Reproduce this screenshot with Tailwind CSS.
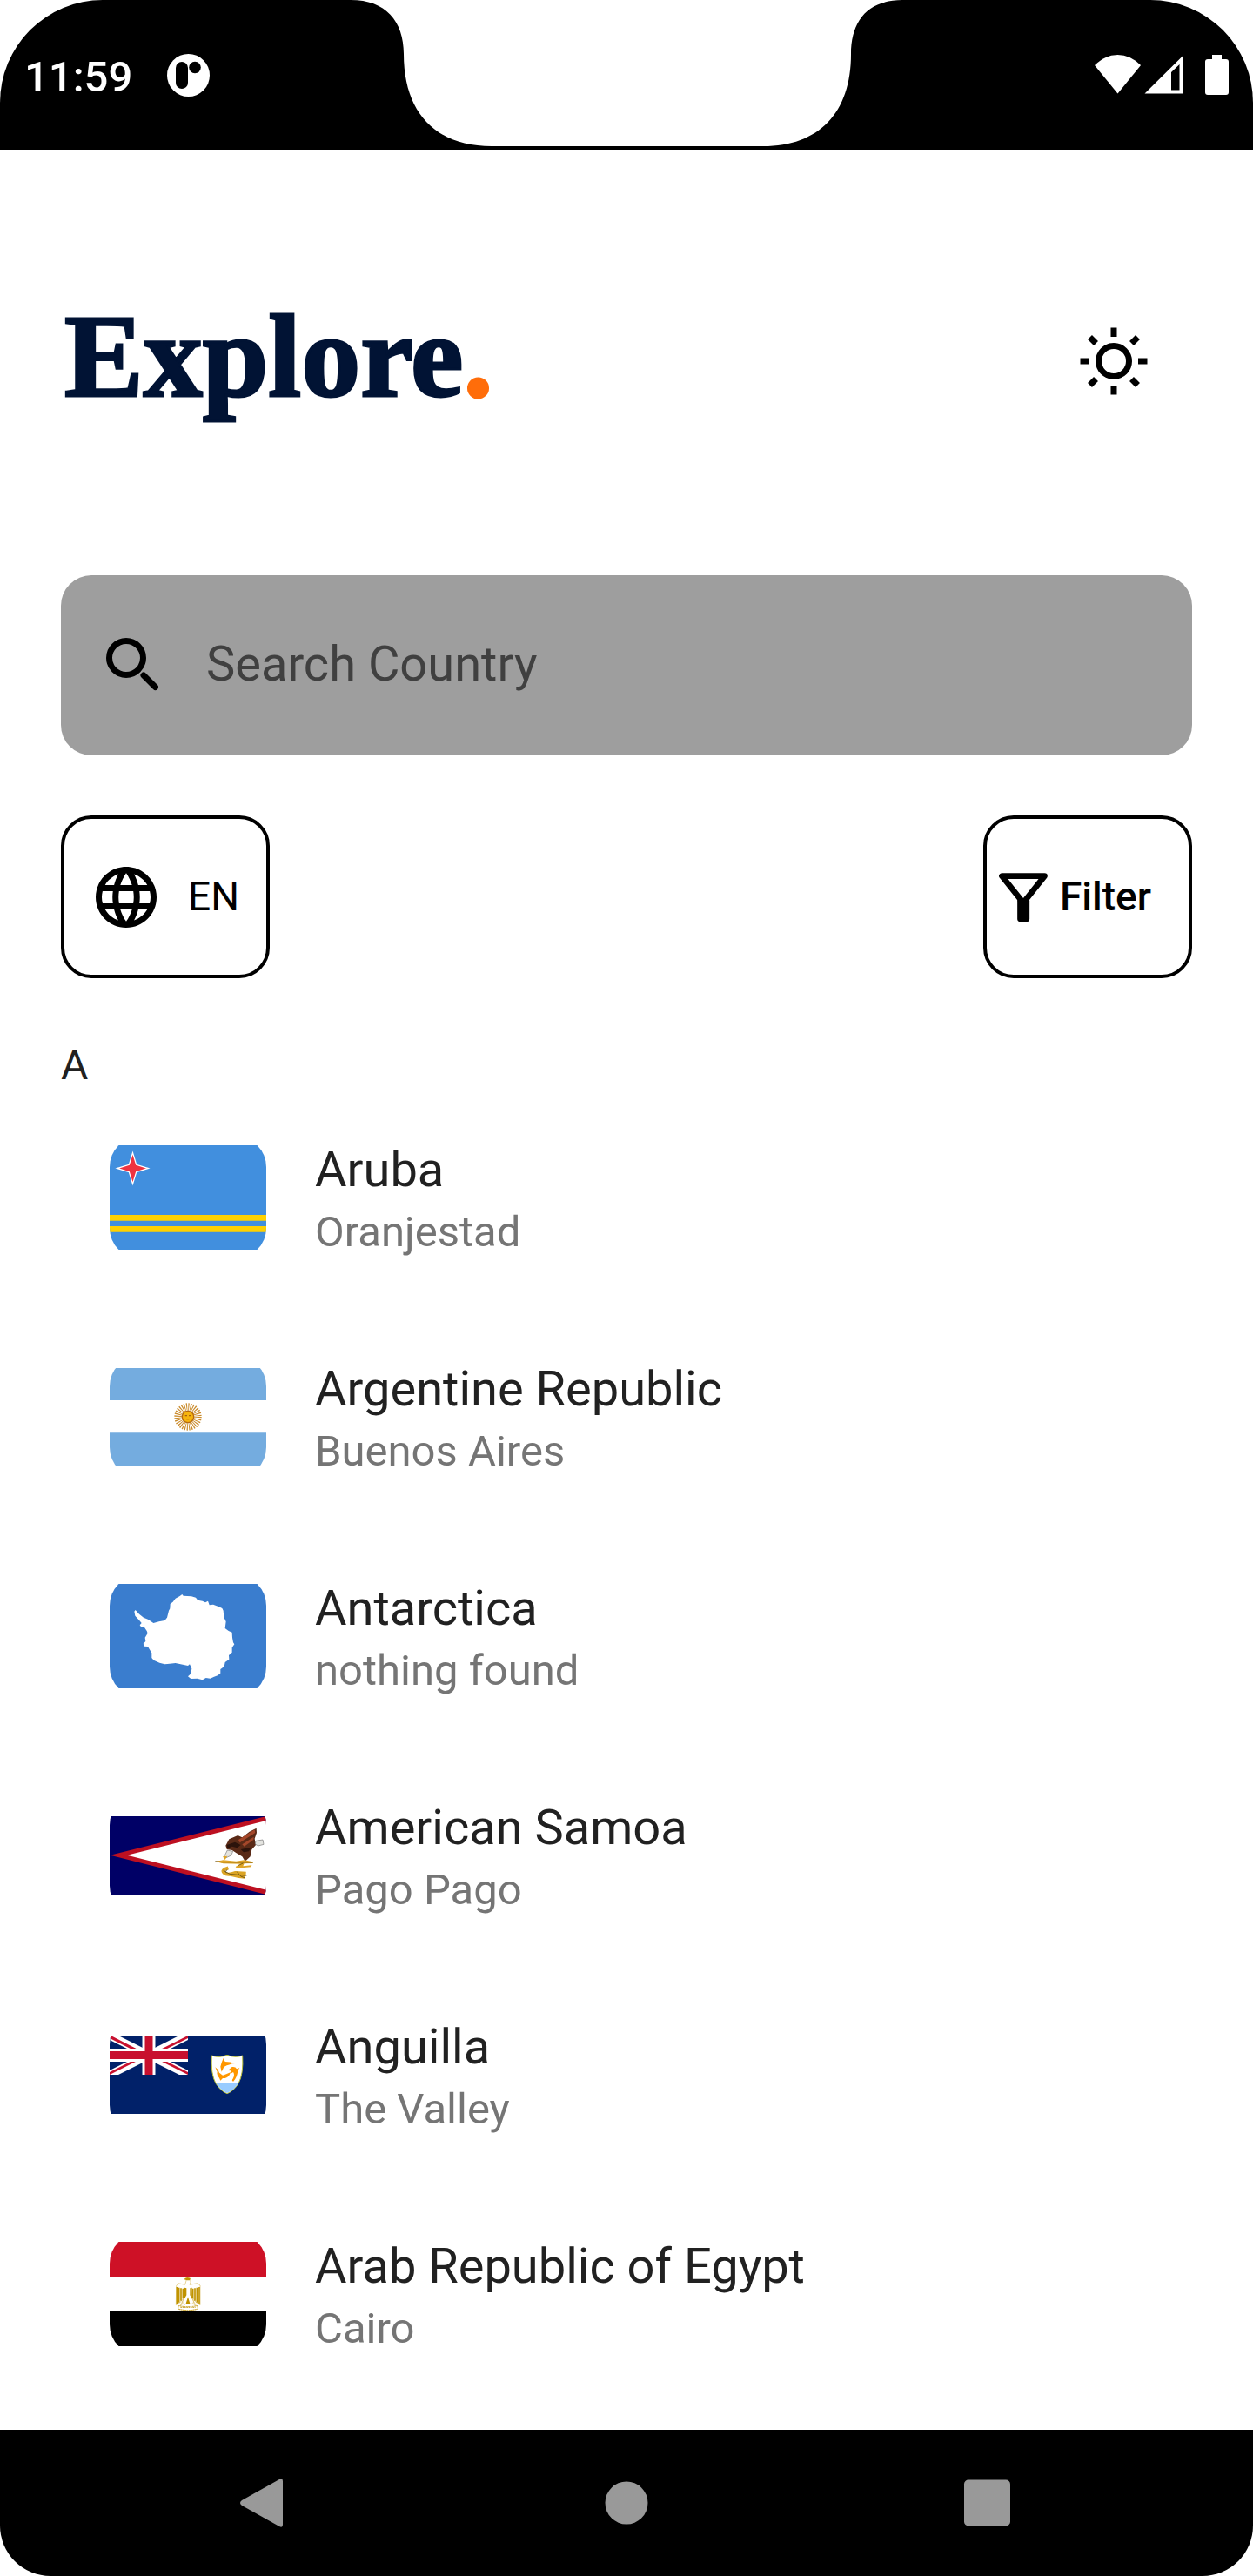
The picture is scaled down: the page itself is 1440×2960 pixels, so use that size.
<!DOCTYPE html>
<html lang="en">
<head>
<meta charset="utf-8">
<meta name="viewport" content="width=device-width, initial-scale=1">
<title>Explore</title>
<script src="https://cdn.jsdelivr.net/npm/@tailwindcss/browser@4"></script>
</head>
<body class="bg-white">
<div class="flex min-h-screen flex-col bg-white font-[Roboto,sans-serif] text-black">

  <!-- Device status bar with the camera notch -->
  <div class="flex h-[172px] rounded-t-[118px] bg-black text-white">
    <div class="flex flex-1 items-center gap-10 pl-7">
      <span class="pt-1 text-[49px] leading-none font-medium">11:59</span>
      <svg class="size-[49px]" viewBox="0 0 49 49" aria-hidden="true">
        <circle cx="24.500" cy="24.500" r="24.500" fill="#fff"/>
        <rect x="10" y="9" width="14" height="31" rx="7" fill="#000"/>
        <circle cx="32" cy="15.500" r="6.800" fill="#000"/>
      </svg>
    </div>
    <svg class="h-[172px] w-[634px]" viewBox="0 0 634 172" aria-hidden="true">
      <path fill="#fff" d="M0 0C40 0 61 24 61 62C61 130 98 168 162 168H474C538 168 575 130 575 62C575 24 594 0 634 0Z"/>
    </svg>
    <div class="flex flex-1 items-center justify-end pr-7">
      <svg class="h-12 w-[154px]" viewBox="1258 62 154 48" fill="#fff" aria-hidden="true">
        <path d="M1258 75Q1270 63 1284.500 63T1311 75L1284.500 107.500Z"/>
        <path fill-rule="evenodd" d="M1315.500 107.500L1360 63.500V107.500ZM1346 83V103.500H1355.500V74Z"/>
        <path d="M1393 63h11v5h5q3 0 3 3v35q0 3-3 3h-21q-3 0-3-3v-35q0-3 3-3h5z"/>
      </svg>
    </div>
  </div>

  <main class="flex flex-1 flex-col px-[70px] pt-[165px] pb-20">
    <header class="flex items-end justify-between pr-6">
      <h1 class="pl-1 font-['Liberation_Serif',serif] text-[136px] leading-[144px] font-bold text-[#011334] [-webkit-text-stroke:3px]">Explore<span class="text-[#ff6d0a]">.</span></h1>
      <button type="button" aria-label="Toggle theme" class="flex size-[132px] items-center justify-center">
        <svg class="size-20" viewBox="-40 -40 80 80" aria-hidden="true">
          <circle r="17.500" fill="none" stroke="#000" stroke-width="7"/>
          <g stroke="#000" stroke-width="7">
            <path d="M0-38.500V-28M0 28V38.500M-38.500 0H-28M28 0H38.500M-27.500-27.500L-20.500-20.500M27.500-27.500L20.500-20.500M-27.500 27.500L-20.500 20.500M27.500 27.500L20.500 20.500"/>
          </g>
        </svg>
      </button>
    </header>

    <label class="mt-[180px] flex h-[207px] items-center gap-[55px] rounded-[35px] bg-[#9e9e9e] pr-12 pl-[52px]">
      <svg class="h-16 w-[60px] shrink-0" viewBox="122 732 60 64" fill="none" stroke="#000" stroke-width="7" stroke-linecap="round" aria-hidden="true">
        <circle cx="145" cy="755" r="19.500"/>
        <path d="M165 775L178.500 788.500"/>
      </svg>
      <input type="search" aria-label="Search Country" placeholder="Search Country" class="h-20 min-w-0 flex-1 bg-transparent pb-1 text-[56px] outline-none placeholder:text-[#404040]">
    </label>

    <div class="mt-[69px] flex justify-between">
      <button type="button" class="flex h-[187px] w-60 items-center gap-[29px] rounded-[35px] border-4 border-black pl-[29px] text-[46px]">
        <svg class="size-[84px] shrink-0" viewBox="0 0 24 24" aria-hidden="true"><path d="M11.990 2C6.470 2 2 6.480 2 12s4.470 10 9.990 10C17.520 22 22 17.520 22 12S17.520 2 11.990 2zm6.930 6h-2.950c-.32-1.250-.78-2.450-1.380-3.560 1.840.63 3.370 1.910 4.330 3.560zM12 4.040c.83 1.200 1.480 2.530 1.910 3.960h-3.820c.43-1.430 1.080-2.760 1.910-3.960zM4.260 14C4.100 13.360 4 12.690 4 12s.1-1.360.26-2h3.380c-.08.66-.14 1.320-.14 2 0 .68.06 1.340.14 2H4.260zm.82 2h2.950c.32 1.250.78 2.450 1.380 3.560-1.840-.63-3.370-1.900-4.330-3.560zm2.950-8H5.080c.96-1.660 2.490-2.930 4.330-3.560C8.810 5.550 8.350 6.750 8.030 8zM12 19.960c-.83-1.200-1.480-2.530-1.910-3.960h3.820c-.43 1.430-1.080 2.760-1.910 3.960zM14.340 14H9.660c-.09-.66-.16-1.320-.16-2 0-.68.07-1.350.16-2h4.680c.09.65.16 1.320.16 2 0 .68-.07 1.340-.16 2zm.25 5.560c.6-1.110 1.060-2.310 1.380-3.560h2.950c-.96 1.650-2.490 2.930-4.330 3.560zM16.360 14c.08-.66.14-1.320.14-2 0-.68-.06-1.340-.14-2h3.380c.16.64.26 1.310.26 2s-.1 1.360-.26 2h-3.380z"/></svg>
        EN
      </button>
      <button type="button" class="flex h-[187px] w-60 items-center gap-3.5 rounded-[35px] border-4 border-black pl-3.5 text-[46px] font-medium">
        <svg class="size-14 shrink-0" viewBox="143 489 167 168" aria-hidden="true">
          <path d="M153 500H300L226.500 592Z" fill="none" stroke="#000" stroke-width="20" stroke-linejoin="round"/>
          <rect x="206" y="576" width="42" height="81" rx="10"/>
        </svg>
        Filter
      </button>
    </div>

    <h2 class="mt-[72px] text-[48px] leading-[56px] text-[#212121]">A</h2>

    <ul class="mt-[54px] flex flex-col gap-27 px-14">
      <li class="flex items-start gap-14">
        <div class="flex h-[140px] w-[180px] shrink-0 items-center overflow-hidden rounded-[35px]">
          <svg class="w-full" viewBox="0 0 540 360" role="img" aria-label="Flag of Aruba">
            <path fill="#418fde" d="M0 0H540V360H0Z"/>
            <path fill="#ffd100" d="M0 240H540V260H0ZM0 279H540V299H0Z"/>
            <path fill="#ef3340" stroke="#fff" stroke-width="4" d="M79.500 26L92 67L133 79.500L92 92L79.500 133L67 92L26 79.500L67 67Z"/>
          </svg>
        </div>
        <div><p class="text-[56px] leading-[76px] text-[#212121]">Aruba</p><p class="text-[49px] leading-[68px] text-[#757575]">Oranjestad</p></div>
      </li>
      <li class="flex items-start gap-14">
        <div class="flex h-[140px] w-[180px] shrink-0 items-center overflow-hidden rounded-[35px]">
          <svg class="w-full" viewBox="0 0 540 336" role="img" aria-label="Flag of Argentina">
            <path fill="#74acdf" d="M0 0H540V336H0Z"/>
            <path fill="#fff" d="M0 111H540V223H0Z"/>
            <circle cx="270" cy="168" r="33" fill="none" stroke="#c98a2b" stroke-width="28" stroke-dasharray="3 3.480"/>
            <circle cx="270" cy="168" r="20" fill="#f6b40e" stroke="#b5690f" stroke-width="4"/>
            <path d="M260 164h7M273 164h7M265 176h9" stroke="#a65f10" stroke-width="4"/>
          </svg>
        </div>
        <div><p class="text-[56px] leading-[76px] text-[#212121]">Argentine Republic</p><p class="text-[49px] leading-[68px] text-[#757575]">Buenos Aires</p></div>
      </li>
      <li class="flex items-start gap-14">
        <div class="flex h-[140px] w-[180px] shrink-0 items-center overflow-hidden rounded-[35px]">
          <svg class="w-full" viewBox="48 60 540 360" role="img" aria-label="Flag of Antarctica">
            <path fill="#3a7dce" d="M48 60H588V420H48Z"/>
            <path fill="#fff" d="M133 155L137 150L150 164L165 176L180 182L199 195L218 190L238 186L246 176L252 152L256 145L257 129L266 122L275 110L290 102L298 96L302 101L330 103L345 107L352 116L368 119L378 124L387 119L392 133L405 131L425 139L436 144L440 152L442 175L449 190L446 213L458 222L470 227L471 245L474 262L478 268L470 280L470 296L459 306L460 320L446 330L443 345L430 354L430 368L420 376L408 380L395 386L380 384L368 391L350 386L328 387L318 379L328 370L331 352L324 337L318 342L300 338L275 333L255 335L238 337L220 332L200 323L193 315L193 298L185 285L180 276L168 275L164 266L172 258L170 245L179 230L176 222L168 210L156 208L152 202L158 195L150 185L136 170Z"/>
          </svg>
        </div>
        <div><p class="text-[56px] leading-[76px] text-[#212121]">Antarctica</p><p class="text-[49px] leading-[68px] text-[#757575]">nothing found</p></div>
      </li>
      <li class="flex items-start gap-14">
        <div class="flex h-[140px] w-[180px] shrink-0 items-center overflow-hidden rounded-[35px]">
          <svg class="w-full" viewBox="48 51 540 270" role="img" aria-label="Flag of American Samoa">
            <path fill="#006" d="M48 51H588V321H48Z"/>
            <path fill="#bd1021" d="M50 185L588 51V321Z"/>
            <path fill="#fff" d="M108 185L588 66V305Z"/>
            <path fill="#5a2a17" d="M448 152L460 130L490 117L505 124L530 104L554 92L555 108L548 128L552 150L538 166L533 190L515 206L505 190L485 178L470 168L452 165Z"/>
            <path fill="#a4472a" d="M492 132L548 97L550 108L497 142ZM505 148L545 122L544 132L512 155Z"/>
            <path fill="#2c130b" d="M452 150L480 140L500 150L488 160L470 155L454 163ZM500 165L536 158L528 172L510 175Z"/>
            <path fill="#e4e4e0" stroke="#777" stroke-width="2" d="M454 168L473 172L467 186L450 194L443 190ZM552 136L576 132L579 148L560 153L550 147Z"/>
            <path fill="#e0a526" d="M438 190L454 188L446 201ZM412 206L440 202L484 206L512 202L542 208V213L512 214L508 223L538 220L536 226L486 230L482 225L500 215L440 214Z"/>
            <path fill="none" stroke="#dba425" stroke-width="12" d="M457 229Q432 236 443 246T482 246L518 248M468 252L494 258L515 260"/>
            <path fill="none" stroke="#4d3909" stroke-width="2" d="M412 206L436 209L542 210M440 238L462 250L520 256M490 221L508 213M454 236Q444 240 452 247M487 242L500 258L515 264"/>
          </svg>
        </div>
        <div><p class="text-[56px] leading-[76px] text-[#212121]">American Samoa</p><p class="text-[49px] leading-[68px] text-[#757575]">Pago Pago</p></div>
      </li>
      <li class="flex items-start gap-14">
        <div class="flex h-[140px] w-[180px] shrink-0 items-center overflow-hidden rounded-[35px]">
          <svg class="w-full" viewBox="48 57 540 270" role="img" aria-label="Flag of Anguilla">
            <path fill="#012169" d="M48 57H588V327H48Z"/>
            <svg x="48" y="57" width="270" height="135" viewBox="0 0 270 135">
              <path stroke="#fff" stroke-width="27" d="M0 0L270 135M270 0L0 135"/>
              <path fill="#c8102e" d="M0 0V9L88 53H108L4 0ZM270 0L164 53H182L270 9ZM0 135L106 82H88L0 126ZM270 135V126L182 82H164Z"/>
              <path stroke="#fff" stroke-width="45" d="M135 0V135M0 67.500H270"/>
              <path stroke="#c8102e" stroke-width="27" d="M135 0V135M0 67.500H270"/>
            </svg>
            <path fill="#fff" stroke="#b8bd35" stroke-width="3" d="M400 126Q425 135 453 124Q480 135 506 126Q510 190 492 222Q476 248 453 257Q430 248 414 222Q396 190 400 126Z"/>
            <path fill="#9cf" d="M413 219H493Q477 246 453 255Q430 246 413 219Z"/>
            <g fill="#ff9700">
              <path d="M434 182L430 164L434 150L440 135L446 147Q466 147 480 153L470 154Q460 158 452 160L442 165Z"/>
              <path d="M456 177L470 165Q482 163 486 172L496 168L490 178Q488 202 474 216L470 211L474 204Q480 192 474 183L468 187L466 178Z"/>
              <path d="M412 166L422 175L426 185L438 194L450 190L466 183L460 194Q452 205 438 204L430 212L426 203Q416 195 419 182Z"/>
            </g>
          </svg>
        </div>
        <div><p class="text-[56px] leading-[76px] text-[#212121]">Anguilla</p><p class="text-[49px] leading-[68px] text-[#757575]">The Valley</p></div>
      </li>
      <li class="flex items-start gap-14">
        <div class="flex h-[140px] w-[180px] shrink-0 items-center overflow-hidden rounded-[35px]">
          <svg class="w-full" viewBox="48 48 540 360" role="img" aria-label="Flag of Egypt">
            <path fill="#ce1126" d="M48 48H588V168H48Z"/>
            <path fill="#fff" d="M48 168H588V288H48Z"/>
            <path d="M48 288H588V408H48Z"/>
            <path fill="#fff" stroke="#d9bc62" stroke-width="2" d="M278 200L284 191L308 196L312 182L306 176L316 171L326 174L327 187L324 196L350 191L360 198V266L345 256L334 240L340 266L350 270L352 280L318 286L284 280L286 270L296 266L304 240L290 258L277 266Z"/>
            <path fill="none" stroke="#c09300" stroke-width="5" d="M280 204V262M287 206V257M294 208V251M301 209V244M335 209V244M342 208V251M349 206V257M357 204V262"/>
            <path fill="#c09300" d="M306 206L313 208V232L305 246ZM332 206L325 208V232L333 246ZM318 238L326 264H310ZM307 175L316 171L326 174L324 181H314L307 178Z"/>
            <path fill="none" stroke="#c9a227" stroke-width="3" d="M284 268Q318 276 352 268M286 280Q318 288 350 280M292 274H344" stroke-dasharray="5 2"/>
            <path fill="none" stroke="#d9bc62" stroke-width="2" d="M303 245L292 268M333 245L346 268M300 256L308 266M337 256L328 266"/>
          </svg>
        </div>
        <div><p class="text-[56px] leading-[76px] text-[#212121]">Arab Republic of Egypt</p><p class="text-[49px] leading-[68px] text-[#757575]">Cairo</p></div>
      </li>
    </ul>
  </main>

  <!-- System navigation -->
  <nav aria-label="System" class="flex h-[168px] items-center justify-between rounded-b-[58px] bg-black px-60">
    <button type="button" aria-label="Back"><svg class="size-[120px]" viewBox="0 0 120 120" fill="#999"><path d="M85 35V85Q85 89 81 87L38 63Q34 60 38 57L81 33Q85 31 85 35Z"/></svg></button>
    <button type="button" aria-label="Home"><svg class="size-[120px]" viewBox="0 0 120 120" fill="#999"><circle cx="60" cy="60" r="24.500"/></svg></button>
    <button type="button" aria-label="Recent apps"><svg class="size-[120px]" viewBox="0 0 120 120" fill="#999"><rect x="28" y="33.500" width="53" height="53" rx="5"/></svg></button>
  </nav>
</div>
</body>
</html>
